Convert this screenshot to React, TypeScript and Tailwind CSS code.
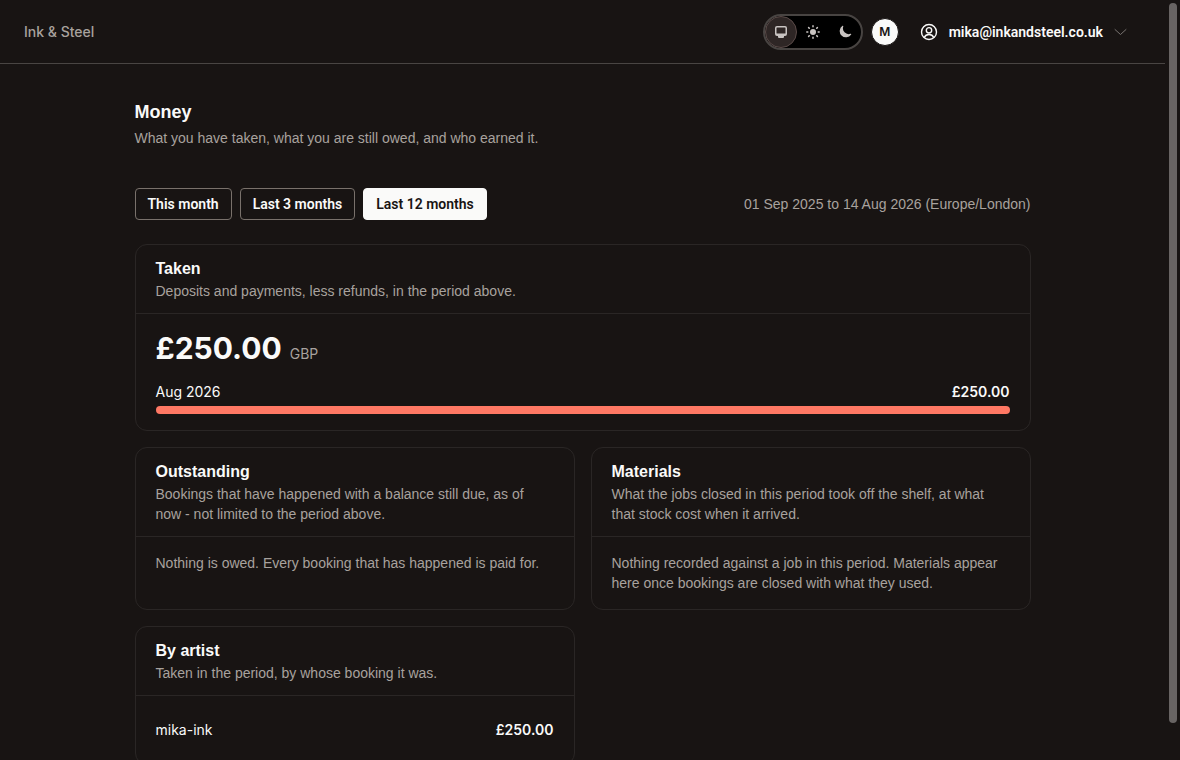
import { useState } from "react"
import type { ReactNode } from "react"

const periods = ["This month", "Last 3 months", "Last 12 months"]

const themes = [
  { name: "System", icon: MonitorIcon },
  { name: "Light", icon: SunIcon },
  { name: "Dark", icon: MoonIcon },
]

const months = [{ label: "Aug 2026", amount: 250 }]

const artists = [{ name: "mika-ink", amount: 250 }]

function money(value: number) {
  return `£${value.toFixed(2)}`
}

export default function App() {
  const [period, setPeriod] = useState("Last 12 months")
  const [theme, setTheme] = useState("System")

  const highest = Math.max(...months.map((month) => month.amount))

  return (
    <div className="flex h-screen overflow-hidden bg-[#181413] font-['Liberation_Sans',Arial,sans-serif] text-sm text-[#fafaf9]">

      <div className="min-w-0 flex-1 overflow-y-auto [scrollbar-width:none]">

        <header className="flex h-16 items-center justify-between border-b border-[#494543] pl-6 pr-9">

          <a href="#" className="font-['Inter',sans-serif] font-medium text-[#a8a29e]">
            Ink &amp; Steel
          </a>

          <div className="flex items-center">

            <div className="flex rounded-full border-2 border-[#484442] bg-black">
              {themes.map(({ name, icon: Icon }) => (
                <button
                  key={name}
                  aria-label={name}
                  onClick={() => setTheme(name)}
                  className={`flex size-8 items-center justify-center rounded-full border text-[#c9c4c2] ${
                    theme === name
                      ? "border-[#5a4a48] bg-[#2e2625]"
                      : "border-transparent"
                  }`}
                >
                  <Icon />
                </button>
              ))}
            </div>

            <div className="ml-2 flex size-7 items-center justify-center rounded-full border border-[#181413] bg-[#fafaf9] font-['Inter',sans-serif] text-xs font-semibold text-[#181413]">
              M
            </div>

            <button className="ml-5 flex items-center gap-2.5 font-['Roboto',sans-serif] font-semibold">
              <UserIcon />
              mika@inkandsteel.co.uk
              <CaretIcon />
            </button>

          </div>

        </header>

        <main className="mx-auto max-w-4xl py-9">

          <h1 className="text-lg/6 font-bold">Money</h1>

          <p className="mt-1 text-[#a8a29e]">
            What you have taken, what you are still owed, and who earned it.
          </p>

          <div className="mt-10 flex items-center justify-between">

            <div className="flex gap-2">
              {periods.map((name) => (
                <button
                  key={name}
                  onClick={() => setPeriod(name)}
                  className={`h-8 rounded border px-3 font-['Roboto',sans-serif] font-semibold ${
                    period === name
                      ? "border-[#fafaf9] bg-[#fafaf9] text-[#181413]"
                      : "border-[#79716b]"
                  }`}
                >
                  {name}
                </button>
              ))}
            </div>

            <p className="text-[#a8a29e]">
              01 Sep 2025 to 14 Aug 2026 (Europe/London)
            </p>

          </div>

          <div className="mt-6 grid grid-cols-2 gap-4">

            <Card
              title="Taken"
              description="Deposits and payments, less refunds, in the period above."
              className="col-span-2"
            >
              <p className="flex items-baseline gap-2 font-['Inter',sans-serif]">
                <span className="text-3xl/9 font-bold">{money(250)}</span>
                <span className="text-[#a8a29e]">GBP</span>
              </p>

              {months.map((month) => (
                <div key={month.label} className="mt-4 font-['Inter',sans-serif]">
                  <div className="flex justify-between">
                    <span>{month.label}</span>
                    <span className="font-semibold">{money(month.amount)}</span>
                  </div>
                  <div
                    className="mt-1 h-2 rounded-full bg-[#ff7864]"
                    style={{ width: `${(month.amount / highest) * 100}%` }}
                  />
                </div>
              ))}
            </Card>

            <Card
              title="Outstanding"
              description={"Bookings that have happened with a balance still due, as of now\u00a0- not limited to the period above."}
            >
              <p className="text-[#a8a29e]">
                Nothing is owed. Every booking that has happened is paid for.
              </p>
            </Card>

            <Card
              title="Materials"
              description="What the jobs closed in this period took off the shelf, at what that stock cost when it arrived."
            >
              <p className="text-[#a8a29e]">
                Nothing recorded against a job in this period. Materials appear
                here once bookings are closed with what they used.
              </p>
            </Card>

            <Card
              title="By artist"
              description="Taken in the period, by whose booking it was."
            >
              <table className="w-full font-['Inter',sans-serif]">
                <tbody>
                  {artists.map((artist) => (
                    <tr key={artist.name}>
                      <td className="py-2">{artist.name}</td>
                      <td className="py-2 text-right font-semibold">
                        {money(artist.amount)}
                      </td>
                    </tr>
                  ))}
                </tbody>
              </table>
            </Card>

          </div>

        </main>

      </div>

      <div className="w-[15px] py-[3px] pl-1 pr-[3px]">
        <div className="h-[95.5%] rounded-full bg-[#686463]" />
      </div>

    </div>
  )
}

function Card({
  title,
  description,
  className = "",
  children,
}: {
  title: string
  description: string
  className?: string
  children: ReactNode
}) {
  return (
    <section className={`rounded-xl border border-[#2a2625] ${className}`}>

      <div className="border-b border-[#2a2625] px-5 py-3">
        <h2 className="text-base font-bold">{title}</h2>
        <p className="text-[#a8a29e]">{description}</p>
      </div>

      <div className="px-5 py-4">{children}</div>

    </section>
  )
}

function MonitorIcon() {
  return (
    <svg viewBox="0 0 16 16" className="size-4" fill="currentColor">
      <path
        fillRule="evenodd"
        d="M4 2h8a2 2 0 0 1 2 2v6a2 2 0 0 1-2 2h-1v1a1 1 0 0 1-1 1H6a1 1 0 0 1-1-1v-1H4a2 2 0 0 1-2-2V4a2 2 0 0 1 2-2Zm0 1.5a.5.5 0 0 0-.5.5v5a.5.5 0 0 0 .5.5h8a.5.5 0 0 0 .5-.5V4a.5.5 0 0 0-.5-.5H4Z"
      />
    </svg>
  )
}

function SunIcon() {
  return (
    <svg viewBox="0 0 16 16" className="size-4" stroke="currentColor" strokeWidth="1.5" strokeLinecap="round">
      <circle cx="8" cy="8" r="3" fill="currentColor" stroke="none" />
      <path d="M8 1.8v1M8 13.2v1M1.8 8h1M13.2 8h1M3.6 3.6l.7.7M11.7 11.7l.7.7M12.4 3.6l-.7.7M4.3 11.7l-.7.7" />
    </svg>
  )
}

function MoonIcon() {
  return (
    <svg viewBox="0 0 16 16" className="size-4" fill="currentColor">
      <path d="M6.3 2.4a.6.6 0 0 0-.8-.6A6.3 6.3 0 1 0 14.2 10.6a.6.6 0 0 0-.8-.8A5.7 5.7 0 0 1 6.3 2.4Z" />
    </svg>
  )
}

function UserIcon() {
  return (
    <svg viewBox="0 0 20 20" className="size-5" fill="none" stroke="currentColor" strokeWidth="1.4">
      <circle cx="10" cy="10" r="7.5" />
      <circle cx="10" cy="8.3" r="2.7" />
      <path d="M5.3 15.5c.8-2 2.5-3 4.7-3s3.9 1 4.7 3" />
    </svg>
  )
}

function CaretIcon() {
  return (
    <svg viewBox="0 0 16 16" className="size-4" fill="none" stroke="#787370" strokeLinecap="round" strokeLinejoin="round">
      <path d="M2 5.5l5.5 5L13 5.5" />
    </svg>
  )
}
